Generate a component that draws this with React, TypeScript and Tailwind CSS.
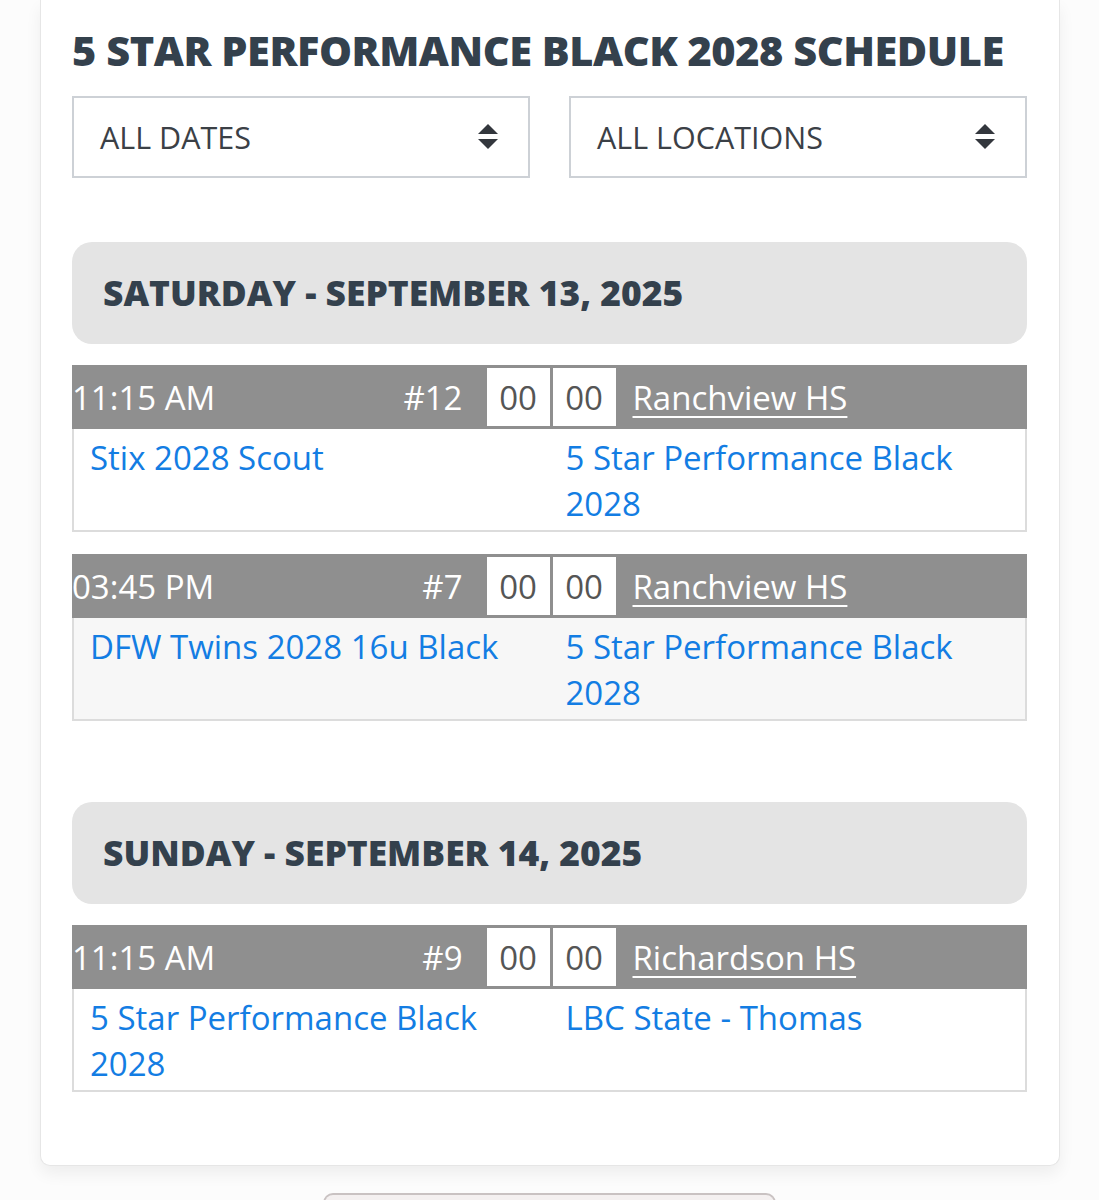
import React from "react";

type Game = {
  time: string;
  num: string;
  loc: string;
  home: string;
  away: string;
  alt?: boolean;
};

type Day = { label: string; games: Game[] };

const days: Day[] = [
  {
    label: "SATURDAY - SEPTEMBER 13, 2025",
    games: [
      { time: "11:15 AM", num: "#12", loc: "Ranchview HS", home: "Stix 2028 Scout", away: "5 Star Performance Black 2028" },
      { time: "03:45 PM", num: "#7", loc: "Ranchview HS", home: "DFW Twins 2028 16u Black", away: "5 Star Performance Black 2028", alt: true },
    ],
  },
  {
    label: "SUNDAY - SEPTEMBER 14, 2025",
    games: [
      { time: "11:15 AM", num: "#9", loc: "Richardson HS", home: "5 Star Performance Black 2028", away: "LBC State - Thomas" },
    ],
  },
];

function SortIcon() {
  return (
    <svg width="20" height="26" viewBox="0 0 20 26" className="shrink-0">
      <path d="M10 0 L20 10 L0 10 Z" fill="#33373d" />
      <path d="M0 15 L20 15 L10 25 Z" fill="#33373d" />
    </svg>
  );
}

function Select({ label }: { label: string }) {
  return (
    <div className="flex-1 h-[82px] border-2 border-[#cdd1d6] bg-white flex items-center justify-between pl-[26px] pr-[30px]">
      <span className="text-[30.5px] text-[#3b4046] leading-none">{label}</span>
      <SortIcon />
    </div>
  );
}

function GameCard({ g }: { g: Game }) {
  return (
    <div>
      <div className="h-[64px] bg-[#8f8f8f] flex items-center">
        <div className="w-1/2 h-full flex items-center">
          <span className="text-[33px] text-white leading-none">{g.time}</span>
          <span className="ml-auto text-[33px] text-white leading-none mr-[24px]">{g.num}</span>
          <div className="w-[63px] h-[58px] bg-white flex items-center justify-center text-[33px] text-[#555] leading-none">00</div>
        </div>
        <div className="w-1/2 h-full flex items-center">
          <div className="ml-[3px] w-[63px] h-[58px] bg-white flex items-center justify-center text-[33px] text-[#555] leading-none">00</div>
          <a className="ml-[17px] text-[33px] text-white underline underline-offset-[6px] decoration-2 leading-none">{g.loc}</a>
        </div>
      </div>
      <div className={`border-x-2 border-b-2 border-[#dcdcdc] h-[103px] flex pt-[6px] ${g.alt ? "bg-[#f7f7f7]" : "bg-white"}`}>
        <div className="w-1/2 pl-[16px] pr-4 text-[33px] leading-[46px] text-[#137de3]">{g.home}</div>
        <div className="w-1/2 pl-[16px] pr-4 text-[33px] leading-[46px] text-[#137de3]">{g.away}</div>
      </div>
    </div>
  );
}

export default function App() {
  return (
    <div className="bg-[#fcfcfc] min-h-[1200px] w-[1099px] overflow-hidden" style={{ fontFamily: '"Open Sans", sans-serif' }}>
      <div className="ml-[40px] w-[1020px] bg-white border-x border-b border-[#e6e6e6] rounded-b-[10px] shadow-[0_8px_16px_rgba(0,0,0,0.06)] pl-[31px] pr-[32px] pt-[22px] pb-[73px]">
        <h1 className="text-[41.5px] font-extrabold tracking-[-0.46px] text-[#34414d] leading-[56px] whitespace-nowrap">5 STAR PERFORMANCE BLACK 2028 SCHEDULE</h1>
        <div className="flex gap-[39px] mt-[18px]">
          <Select label="ALL DATES" />
          <Select label="ALL LOCATIONS" />
        </div>
        {days.map((d, i) => (
          <div key={d.label} className={i === 0 ? "mt-[64px]" : "mt-[81px]"}>
            <div className="h-[102px] bg-[#e4e4e4] rounded-[20px] flex items-center pl-[31px]">
              <span className="text-[35.4px] font-extrabold text-[#34414d] leading-none">{d.label}</span>
            </div>
            <div className="mt-[21px] flex flex-col gap-[22px]">
              {d.games.map((g, j) => (
                <GameCard key={j} g={g} />
              ))}
            </div>
          </div>
        ))}
      </div>
      <div className="mt-[27px] mx-auto w-[453px] h-[20px] rounded-t-[10px] border-2 border-b-0 border-[#c9c2c2] bg-[#f4f0f0]" />
    </div>
  );
}
